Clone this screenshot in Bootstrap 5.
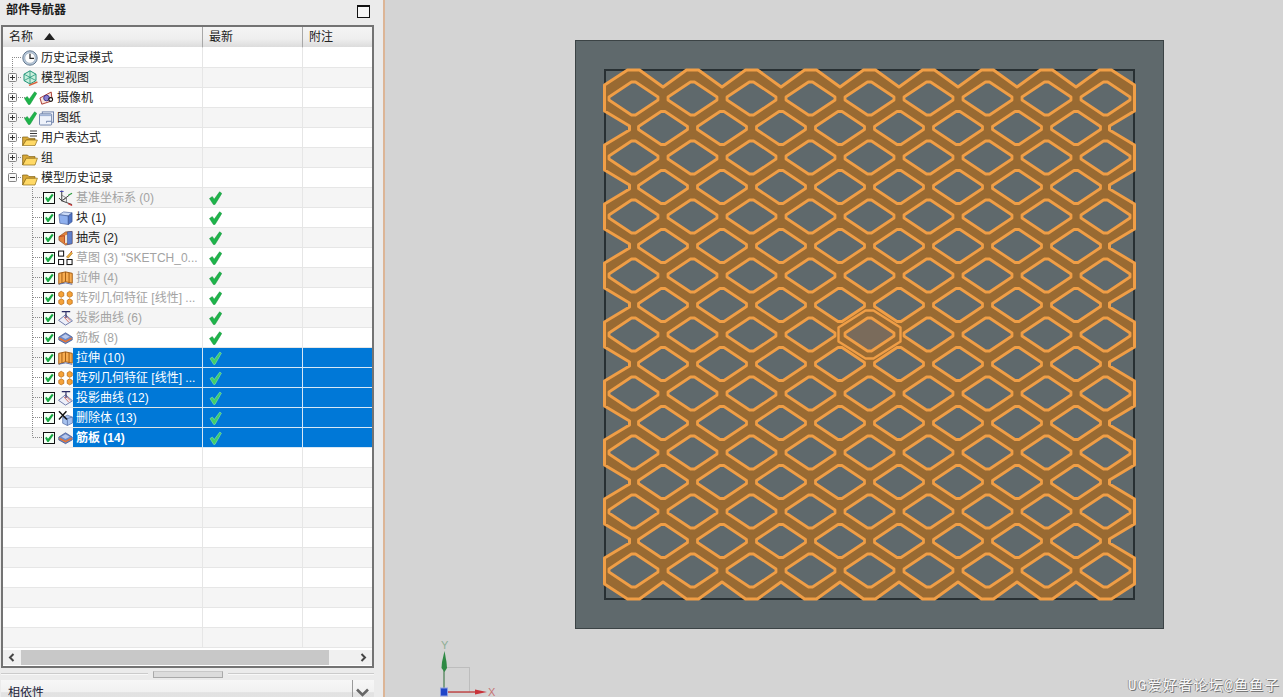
<!DOCTYPE html>
<html lang="zh-CN">
<head>
  <meta charset="UTF-8">
  <title>部件导航器</title>
  <link href="https://cdn.jsdelivr.net/npm/bootstrap@5.3.3/dist/css/bootstrap.min.css" rel="stylesheet">
  <script src="https://cdn.jsdelivr.net/npm/bootstrap@5.3.3/dist/js/bootstrap.bundle.min.js"></script>
  <style>
    html, body { height: 697px; overflow: hidden; }
    body {
      font-family: "Liberation Sans", "Noto Sans CJK SC", sans-serif;
      font-size: 12px;
      line-height: 20px;
      color: #222;
      background: #d4d4d4;
    }
    .side-panel { width: 383px; height: 697px; background: #ebebeb; flex: none; }
    .side-panel > * { flex: none; }
    .side-rule { width: 2px; height: 697px; background: #dcb596; flex: none; }
    .view-area { width: 898px; height: 697px; }
    .view-area svg { display: block; }

    .panel-title { height: 25px; padding: 0 4px 5px 6px; font-weight: 700; line-height: 19px; color: #1c1c1c; }
    .max-box { width: 13px; height: 13px; margin-right: 9px; margin-top: 2px; border: 1px solid #111; border-top-width: 2px; background: #f6f6f6; }

    .tree-frame { width: 373px; height: 643px; margin-left: 1px; border: 2px solid #737373; background: #fff; }
    .tree-table { width: 369px; table-layout: fixed; border-collapse: separate; border-spacing: 0; --bs-table-bg: transparent; }
    .tree-table th, .tree-table td {
      padding: 0; height: 20px; font-weight: 400; color: #222; white-space: nowrap;
      border-bottom: 1px solid #e6e6e6; border-right: 1px solid #e6e6e6;
      box-shadow: none; line-height: 19px;
    }
    .tree-table th:last-child, .tree-table td:last-child { border-right: 0; }
    .tree-table th {
      height: 21px; padding: 1px 0 0 6px; line-height: 19px;
      background: linear-gradient(#f4f4f4, #eeeeee 60%, #dcdcdc);
      border-bottom: 1px solid #fff; border-right: 1px solid #a8a8a8;
    }
    .tree-table tbody tr:nth-child(even) td { background: #f5f5f5; }
    .tree-table tbody tr.picked td { background: #0078d7; border-color: #d8e8f6; }
    .tree-table tbody tr.picked td:first-child { background: transparent; border-bottom-color: #e6e6e6; border-right-color: #d8e8f6; }
    .tree-table tbody tr.picked:nth-child(even) td:first-child { background: #f5f5f5; }
    .sort-mark { margin-left: 11px; vertical-align: 1px; }

    .name-cell { height: 19px; }
    .lv-a { padding-left: 19px; }
    .lv-b { padding-left: 21px; }
    .lv-c { padding-left: 40px; }
    .ico { width: 16px; height: 16px; flex: none; }
    .tick-ico { width: 13px; height: 14px; flex: none; }
    .box-ico { width: 12px; height: 12px; flex: none; margin-right: 3px; }
    .lbl-a { margin-left: 3px; padding-top: 1px; }
    .lbl-c { padding-left: 3px; padding-top: 1px; flex: 1; min-width: 0; overflow: hidden; }
    .lv-b .ico { width: 15px; margin-left: 2px; }
    .lv-c .ico { width: 15px; }
    .dim-text { color: #a3a3a3; }
    .tree-table .picked .lbl-c { background: #0078d7; color: #fff; height: 19px; }
    .tree-table .picked .strong-text { font-weight: 700; }
    .col-tick { display: block; margin: 3px 0 0 6px; }

    .tree-lines { left: 0; top: 0; pointer-events: none; }
    .h-bar { height: 15px; margin-top: 2px; background: #f0f0f0; padding: 0 5px; }
    .h-thumb { position: relative; left: 6px; width: 308px; height: 15px; background: #c8c8c8; }

    .split-row { height: 12px; padding: 0 9px 0 1px; }
    .split-line { height: 2px; background: #cbcbcb; border-bottom: 1px solid #f8f8f8; }
    .split-grip { width: 70px; height: 7px; margin: 0 5px; background: #dcdcdc; border: 1px solid #a9a9a9; border-top-color: #c8c8c8; }
    .dep-bar {
      width: 373px; height: 30px; margin-left: 1px; padding-left: 7px; padding-top: 3px;
      background: linear-gradient(#f7f7f7, #f1f1f1 40%, #e2e2e2 42%, #e4e4e4);
      color: #23233a; font-size: 12px;
    }
    .dep-end { width: 22px; border-left: 1px solid #9a9a9a; height: 30px; margin-top: -3px; padding: 8px 0 0 3px; }

    .stamp {
      right: 3px; bottom: 1px; font-family: "Liberation Mono", "Noto Sans CJK SC", monospace;
      font-size: 14px; letter-spacing: 1.35px; line-height: 20px; color: #f8f8f8;
      text-shadow: 1px 1px 0 #777, -1px 0 0 #999;
    }
    .axis-text { font-family: "Liberation Sans", sans-serif; font-size: 11px; }
  </style>
</head>
<body>
  <!-- shared icons -->
  <svg class="position-absolute" width="0" height="0" aria-hidden="true">
    <symbol id="i-tick" viewBox="0 0 13 14">
      <path d="M0.5 7.5 3.3 5.6 5.2 8.2 10.6 0.8 12.8 2.4 6 13.5H4.4Z" fill="#1eb44a" stroke="#15903a" stroke-width=".5"/>
    </symbol>
    <symbol id="i-tick-sel" viewBox="0 0 13 14">
      <path d="M1 7.5 3.4 6 5.2 8.6 10.8 1 12.4 2.2 6 13.4H4.6Z" fill="#3fce6c" stroke="#9ce8b4" stroke-width=".5"/>
    </symbol>
    <symbol id="i-box" viewBox="0 0 12 12">
      <rect x=".5" y=".5" width="11" height="11" fill="#f4fff6" stroke="#111"/>
      <path d="M2 6 3.6 4.8 5 6.8 9 1.8 10.6 3 5.6 10H4.4Z" fill="#17a943"/>
    </symbol>
    <symbol id="i-clock" viewBox="0 0 16 16">
      <circle cx="8" cy="8" r="7.2" fill="#b7c8da" stroke="#64788e"/>
      <circle cx="8" cy="8" r="5.2" fill="#fdfdfd" stroke="#8fa1b4" stroke-width=".6"/>
      <path d="M8 3.8V8.4H12" fill="none" stroke="#222" stroke-width="1.2"/>
    </symbol>
    <symbol id="i-view" viewBox="0 0 16 16">
      <path d="M8 .8 14 4.2V10.6L8 14 2 10.6V4.2Z" fill="#c8efdc" stroke="#23957a"/>
      <path d="M2 4.2 14 10.6M14 4.2 2 10.6M8 .8V14" fill="none" stroke="#23957a" stroke-width=".8"/>
      <path d="M7 15.4 15.4 12" stroke="#d8623a" stroke-width="1.4"/>
    </symbol>
    <symbol id="i-cam" viewBox="0 0 16 16">
      <path d="M1 8 13 1.6 14 11 3 14.6Z" fill="#f8e4dc" stroke="#a8352c"/>
      <circle cx="8" cy="8" r="3" fill="#8a7fd0" stroke="#3a2f90"/>
      <circle cx="12.5" cy="9.6" r="2" fill="#fff" stroke="#111" stroke-width="1.2"/>
    </symbol>
    <symbol id="i-sheet" viewBox="0 0 16 16">
      <rect x="3.5" y="1.5" width="12" height="11" fill="#f3f5fb" stroke="#6b7fa8"/>
      <rect x=".5" y="3.5" width="13" height="12" rx="1" fill="#eef2fa" stroke="#6b7fa8"/>
      <path d="M1 4h12v2H1Z" fill="#9fb2d4"/>
      <path d="M8 13V11.5H13" fill="none" stroke="#6b7fa8"/>
    </symbol>
    <symbol id="i-folder" viewBox="0 0 16 16">
      <path d="M.6 15V5H5.5L7 6.6H13V8.5H4.5L.6 15Z" fill="#d8a93a" stroke="#7c5c10" stroke-width=".7"/>
      <path d="M.8 15 4.2 8.2H15.4L13 15Z" fill="#ffd966" stroke="#8c6a14" stroke-width=".7"/>
    </symbol>
    <symbol id="i-folder-x" viewBox="0 0 16 16">
      <path d="M.6 15.6V7H5.5L7 8.4H13V10H4.5L.6 15.6Z" fill="#d8a93a" stroke="#7c5c10" stroke-width=".7"/>
      <path d="M.8 15.6 4.2 10H15.4L13 15.6Z" fill="#ffd966" stroke="#8c6a14" stroke-width=".7"/>
      <path d="M8 1H15M8 3.5H15M8 6H15" stroke="#222" stroke-width=".9"/>
    </symbol>
    <symbol id="i-csys" viewBox="0 0 16 16">
      <path d="M4 0V11L1 8M4 11 12 5M4 11 15 15" fill="none" stroke="#333"/>
      <path d="M4 5 9 8 4 11M9 8 9 13" fill="none" stroke="#666" stroke-width=".8"/>
      <path d="M2 1H6" stroke="#3a3ab0"/>
      <path d="M11 14 15 16" stroke="#d03030" stroke-width="1.2"/>
      <path d="M11 5 15 3" stroke="#2a9a3a" stroke-width="1.2"/>
    </symbol>
    <symbol id="i-block" viewBox="0 0 16 16">
      <path d="M1 4.5 6 1.5 15 2.5 11 5.8Z" fill="#cddcf8" stroke="#46609c" stroke-width=".7"/>
      <path d="M1 4.5 11 5.8V15L2 13.6Z" fill="#8fb0ee" stroke="#46609c" stroke-width=".7"/>
      <path d="M11 5.8 15 2.5V12L11 15Z" fill="#4f74c6" stroke="#35508e" stroke-width=".7"/>
    </symbol>
    <symbol id="i-shell" viewBox="0 0 16 16">
      <path d="M1 6.5 8 1.5 15 1V14L8 15.5 1 10.5Z" fill="#e2843c" stroke="#8a4a20" stroke-width=".7"/>
      <path d="M7 5.5 13 3V12.5L7 13.5Z" fill="#f4ecd8"/>
      <path d="M10 1.5 15 1V14L10 15Z" fill="#5f7fcb" stroke="#3a4f8c" stroke-width=".6"/>
      <path d="M1 6.5 7 5.5V13.5" fill="none" stroke="#b8431c"/>
    </symbol>
    <symbol id="i-sketch" viewBox="0 0 16 16">
      <g fill="#fff" stroke="#111" stroke-width="1.1">
        <rect x=".6" y=".6" width="5.4" height="5.4"/>
        <rect x=".6" y="9.6" width="5.4" height="5.4"/>
        <rect x="9.6" y="9.6" width="5.4" height="5.4"/>
      </g>
      <path d="M9 7 14 1.5 15.5 3 11 8Z" fill="#f2b13c" stroke="#9a6514" stroke-width=".6"/>
      <path d="M13.6 1.8 15 .6" stroke="#c03020"/>
    </symbol>
    <symbol id="i-extrude" viewBox="0 0 16 16">
      <path d="M.8 3 8 1.5 15.2 3V13.5L8 12 .8 14.5Z" fill="#f8ac50" stroke="#a05a10"/>
      <path d="M4.2 2.6V13.2M8 1.5V12M11.8 2.6V13" stroke="#a05a10"/>
      <path d="M.8 14.6 8 13.2 15.2 14.8" fill="none" stroke="#5f6fa8"/>
    </symbol>
    <symbol id="i-pattern" viewBox="0 0 16 16">
      <g fill="#f5a238" stroke="#b05f08" stroke-width=".7">
        <path d="M.8 2.5 3.4.8 6.2 2.5V5.8L3.4 7.3.8 5.8Z"/>
        <path d="M9.8 2.5 12.4.8 15.2 2.5V5.8L12.4 7.3 9.8 5.8Z"/>
        <path d="M.8 10.5 3.4 8.8 6.2 10.5V13.8L3.4 15.3.8 13.8Z"/>
        <path d="M9.8 10.5 12.4 8.8 15.2 10.5V13.8L12.4 15.3 9.8 13.8Z"/>
      </g>
    </symbol>
    <symbol id="i-project" viewBox="0 0 16 16">
      <path d="M.6 10.5 8 4.5 15.4 11 8 15.6Z" fill="#eceef8" stroke="#6a76a8"/>
      <path d="M6.5 7 11.5 12.5M8.5 6 13 10.8" stroke="#d86a5a"/>
      <path d="M4 1.2H13M8.5 1.2V8" fill="none" stroke="#2d2d66" stroke-width="1.2"/>
    </symbol>
    <symbol id="i-rib" viewBox="0 0 16 16">
      <path d="M.8 7 8 2.4 15.2 7V10L8 14 .8 10Z" fill="#6f8ac8" stroke="#3d4f86" stroke-width=".7"/>
      <path d="M1.4 7.4 8 11 14.6 7.4V9.2L8 12.8 1.4 9.2Z" fill="#e8722c"/>
      <path d="M3.6 6.6 8 4 12.4 6.6 8 9Z" fill="#b9c8ea"/>
    </symbol>
    <symbol id="i-delete" viewBox="0 0 16 16">
      <path d="M5 7.5 10 5 15.4 7V13.4L10 16 5 13.6Z" fill="#a8c2ee" stroke="#46609c" stroke-width=".7"/>
      <path d="M10 8.6V16M5 7.5 10 8.6 15.4 7" fill="none" stroke="#46609c" stroke-width=".7"/>
      <path d="M1 .8 9.5 9.5M9 .8 1 9.5" stroke="#111" stroke-width="1.5"/>
    </symbol>
  </svg>

  <div class="d-flex">
    <div class="side-panel position-relative d-flex flex-column overflow-hidden">
      <div class="panel-title d-flex justify-content-between align-items-center">
        <span>部件导航器</span>
        <span class="max-box"></span>
      </div>

      <div class="tree-frame">
        <table class="table mb-0 tree-table">
          <colgroup><col style="width:200px"><col style="width:100px"><col style="width:69px"></colgroup>
          <thead>
            <tr>
              <th>名称<svg class="sort-mark" width="11" height="7" viewBox="0 0 11 7"><path d="M5.5 0 11 7H0Z" fill="#222"/></svg></th>
              <th>最新</th>
              <th>附注</th>
            </tr>
          </thead>
          <tbody>
            <tr><td><div class="name-cell d-flex align-items-center lv-a"><svg class="ico"><use href="#i-clock"/></svg><span class="lbl-a">历史记录模式</span></div></td><td></td><td></td></tr>
            <tr><td><div class="name-cell d-flex align-items-center lv-a"><svg class="ico"><use href="#i-view"/></svg><span class="lbl-a">模型视图</span></div></td><td></td><td></td></tr>
            <tr><td><div class="name-cell d-flex align-items-center lv-b"><svg class="tick-ico"><use href="#i-tick"/></svg><svg class="ico"><use href="#i-cam"/></svg><span class="lbl-a">摄像机</span></div></td><td></td><td></td></tr>
            <tr><td><div class="name-cell d-flex align-items-center lv-b"><svg class="tick-ico"><use href="#i-tick"/></svg><svg class="ico"><use href="#i-sheet"/></svg><span class="lbl-a">图纸</span></div></td><td></td><td></td></tr>
            <tr><td><div class="name-cell d-flex align-items-center lv-a"><svg class="ico"><use href="#i-folder-x"/></svg><span class="lbl-a">用户表达式</span></div></td><td></td><td></td></tr>
            <tr><td><div class="name-cell d-flex align-items-center lv-a"><svg class="ico"><use href="#i-folder"/></svg><span class="lbl-a">组</span></div></td><td></td><td></td></tr>
            <tr><td><div class="name-cell d-flex align-items-center lv-a"><svg class="ico"><use href="#i-folder"/></svg><span class="lbl-a">模型历史记录</span></div></td><td></td><td></td></tr>

            <tr><td><div class="name-cell d-flex align-items-center lv-c"><svg class="box-ico"><use href="#i-box"/></svg><svg class="ico"><use href="#i-csys"/></svg><span class="lbl-c dim-text">基准坐标系 (0)</span></div></td><td><svg class="tick-ico col-tick"><use href="#i-tick"/></svg></td><td></td></tr>
            <tr><td><div class="name-cell d-flex align-items-center lv-c"><svg class="box-ico"><use href="#i-box"/></svg><svg class="ico"><use href="#i-block"/></svg><span class="lbl-c">块 (1)</span></div></td><td><svg class="tick-ico col-tick"><use href="#i-tick"/></svg></td><td></td></tr>
            <tr><td><div class="name-cell d-flex align-items-center lv-c"><svg class="box-ico"><use href="#i-box"/></svg><svg class="ico"><use href="#i-shell"/></svg><span class="lbl-c">抽壳 (2)</span></div></td><td><svg class="tick-ico col-tick"><use href="#i-tick"/></svg></td><td></td></tr>
            <tr><td><div class="name-cell d-flex align-items-center lv-c"><svg class="box-ico"><use href="#i-box"/></svg><svg class="ico"><use href="#i-sketch"/></svg><span class="lbl-c dim-text">草图 (3) "SKETCH_0...</span></div></td><td><svg class="tick-ico col-tick"><use href="#i-tick"/></svg></td><td></td></tr>
            <tr><td><div class="name-cell d-flex align-items-center lv-c"><svg class="box-ico"><use href="#i-box"/></svg><svg class="ico"><use href="#i-extrude"/></svg><span class="lbl-c dim-text">拉伸 (4)</span></div></td><td><svg class="tick-ico col-tick"><use href="#i-tick"/></svg></td><td></td></tr>
            <tr><td><div class="name-cell d-flex align-items-center lv-c"><svg class="box-ico"><use href="#i-box"/></svg><svg class="ico"><use href="#i-pattern"/></svg><span class="lbl-c dim-text">阵列几何特征 [线性] ...</span></div></td><td><svg class="tick-ico col-tick"><use href="#i-tick"/></svg></td><td></td></tr>
            <tr><td><div class="name-cell d-flex align-items-center lv-c"><svg class="box-ico"><use href="#i-box"/></svg><svg class="ico"><use href="#i-project"/></svg><span class="lbl-c dim-text">投影曲线 (6)</span></div></td><td><svg class="tick-ico col-tick"><use href="#i-tick"/></svg></td><td></td></tr>
            <tr><td><div class="name-cell d-flex align-items-center lv-c"><svg class="box-ico"><use href="#i-box"/></svg><svg class="ico"><use href="#i-rib"/></svg><span class="lbl-c dim-text">筋板 (8)</span></div></td><td><svg class="tick-ico col-tick"><use href="#i-tick"/></svg></td><td></td></tr>

            <tr class="picked"><td><div class="name-cell d-flex align-items-center lv-c"><svg class="box-ico"><use href="#i-box"/></svg><svg class="ico"><use href="#i-extrude"/></svg><span class="lbl-c">拉伸 (10)</span></div></td><td><svg class="tick-ico col-tick"><use href="#i-tick-sel"/></svg></td><td></td></tr>
            <tr class="picked"><td><div class="name-cell d-flex align-items-center lv-c"><svg class="box-ico"><use href="#i-box"/></svg><svg class="ico"><use href="#i-pattern"/></svg><span class="lbl-c">阵列几何特征 [线性] ...</span></div></td><td><svg class="tick-ico col-tick"><use href="#i-tick-sel"/></svg></td><td></td></tr>
            <tr class="picked"><td><div class="name-cell d-flex align-items-center lv-c"><svg class="box-ico"><use href="#i-box"/></svg><svg class="ico"><use href="#i-project"/></svg><span class="lbl-c">投影曲线 (12)</span></div></td><td><svg class="tick-ico col-tick"><use href="#i-tick-sel"/></svg></td><td></td></tr>
            <tr class="picked"><td><div class="name-cell d-flex align-items-center lv-c"><svg class="box-ico"><use href="#i-box"/></svg><svg class="ico"><use href="#i-delete"/></svg><span class="lbl-c">删除体 (13)</span></div></td><td><svg class="tick-ico col-tick"><use href="#i-tick-sel"/></svg></td><td></td></tr>
            <tr class="picked"><td><div class="name-cell d-flex align-items-center lv-c"><svg class="box-ico"><use href="#i-box"/></svg><svg class="ico"><use href="#i-rib"/></svg><span class="lbl-c strong-text">筋板 (14)</span></div></td><td><svg class="tick-ico col-tick"><use href="#i-tick-sel"/></svg></td><td></td></tr>

            <tr><td></td><td></td><td></td></tr>
            <tr><td></td><td></td><td></td></tr>
            <tr><td></td><td></td><td></td></tr>
            <tr><td></td><td></td><td></td></tr>
            <tr><td></td><td></td><td></td></tr>
            <tr><td></td><td></td><td></td></tr>
            <tr><td></td><td></td><td></td></tr>
            <tr><td></td><td></td><td></td></tr>
            <tr><td></td><td></td><td></td></tr>
            <tr><td></td><td></td><td></td></tr>
          </tbody>
        </table>
        <div class="h-bar d-flex align-items-center justify-content-between">
          <svg width="7" height="9" viewBox="0 0 7 9"><path d="M5.5 1 2 4.5 5.5 8" fill="none" stroke="#444" stroke-width="2"/></svg>
          <div class="h-thumb me-auto"></div>
          <svg width="7" height="9" viewBox="0 0 7 9"><path d="M1.5 1 5 4.5 1.5 8" fill="none" stroke="#444" stroke-width="2"/></svg>
        </div>
      </div>

      <div class="split-row d-flex align-items-center">
        <div class="split-line flex-grow-1"></div>
        <div class="split-grip"></div>
        <div class="split-line flex-grow-1"></div>
      </div>

      <div class="dep-bar d-flex justify-content-between">
        <span>相依性</span>
        <div class="dep-end">
          <svg class="d-block" width="13" height="9" viewBox="0 0 13 9"><path d="M1 1.5 6.5 7 12 1.5" fill="none" stroke="#666" stroke-width="2.6"/></svg>
        </div>
      </div>

      <!-- tree connectors and expanders -->
      <svg class="tree-lines position-absolute" width="373" height="450" viewBox="0 0 373 450" id="treeLines"></svg>
    </div>

    <div class="side-rule"></div>

    <div class="view-area position-relative">
      <svg id="model" width="898" height="697" viewBox="385 0 898 697">
        <rect x="575.5" y="40.5" width="588" height="588" fill="#5f696c" stroke="#3b4345"/>
        <rect x="605" y="70" width="529" height="529" fill="#5f696c" stroke="#283033" stroke-width="2"/>
        <g id="mesh"></g>

        <!-- triad -->
        <rect x="444.5" y="667.5" width="25" height="25" fill="none" stroke="#bdbdbd"/>
        <path d="M444 692V662" stroke="#7f9f84" stroke-width="2"/>
        <path d="M444.5 651 442 662 441.5 668 444.5 672 447 668 446.5 662Z" fill="#2f8a45"/>
        <path d="M444 692H478" stroke="#c24a4a" stroke-width="1.5"/>
        <path d="M475 689.5 487 692 475 694.5Z" fill="#c8333a"/>
        <rect x="440.5" y="688" width="7" height="8" fill="#1f45c8" stroke="#8fa0e0"/>
        <text class="axis-text" x="441" y="649" fill="#8fae95">Y</text>
        <text class="axis-text" x="488" y="696" fill="#c67474">X</text>
      </svg>
      <div class="stamp position-absolute">UG爱好者论坛@鱼鱼子</div>
    </div>
  </div>

  <script>
    const NS = "http://www.w3.org/2000/svg";
    const mesh = document.getElementById("mesh");
    const ORANGE = "#f09e46", BROWN = "#996a32", PLATE = "#5f696c";

    function poly(parent, pts, fill, stroke, width) {
      const el = document.createElementNS(NS, "polygon");
      el.setAttribute("points", pts.map(p => p.join(",")).join(" "));
      el.setAttribute("fill", fill);
      el.setAttribute("stroke", stroke);
      el.setAttribute("stroke-width", width);
      el.setAttribute("stroke-linejoin", "round");
      parent.appendChild(el);
    }

    // mesh outline, clockwise from the top left corner
    const midX = 869.5, midY = 334.5, stepX = 59, stepY = 29.5;
    const meshL = 604.5, meshR = 1134.5, meshT = 70, meshB = 599;
    const outline = [[meshL, 85]];
    for (let i = -4; i <= 4; i++) {
      const cx = midX + i * stepX;
      outline.push([cx - 6, meshT], [cx + 6, meshT]);
      if (i < 4) outline.push([cx + stepX / 2, 87]);
    }
    outline.push([meshR, 85]);
    for (let r = -7; r <= 7; r += 2) {
      const cy = midY + r * stepY;
      outline.push([meshR, cy - 17], [meshR - 25, cy - 2], [meshR - 25, cy + 2], [meshR, cy + 17]);
    }
    outline.push([meshR, 584]);
    for (let i = 4; i >= -4; i--) {
      const cx = midX + i * stepX;
      outline.push([cx + 6, meshB], [cx - 6, meshB]);
      if (i > -4) outline.push([cx - stepX / 2, 582]);
    }
    outline.push([meshL, 584]);
    for (let r = 7; r >= -7; r -= 2) {
      const cy = midY + r * stepY;
      outline.push([meshL, cy + 17], [meshL + 25, cy + 2], [meshL + 25, cy - 2], [meshL, cy - 17]);
    }
    poly(mesh, outline, BROWN, ORANGE, 3);

    function hole(cx, cy, fill) {
      poly(mesh, [[cx - 2, cy - 16.5], [cx + 2, cy - 16.5], [cx + 24.5, cy - 1.5], [cx + 24.5, cy + 1.5],
        [cx + 2, cy + 16.5], [cx - 2, cy + 16.5], [cx - 24.5, cy + 1.5], [cx - 24.5, cy - 1.5]], fill, ORANGE, 2.8);
    }

    // full holes only, the half ones at the sides are notches in the outline
    for (let r = -8; r <= 8; r++) {
      const odd = Math.abs(r) % 2 === 1;
      const from = odd ? -3.5 : -4, to = odd ? 3.5 : 4;
      for (let c = from; c <= to; c++) {
        if (r === 0 && c === 0) continue;
        hole(midX + c * stepX, midY + r * stepY, PLATE);
      }
    }

    // selected centre cell
    poly(mesh, [[midX - 4, midY - 24], [midX + 4, midY - 24], [midX + 31, midY - 7], [midX + 31, midY + 7],
      [midX + 4, midY + 24], [midX - 4, midY + 24], [midX - 31, midY + 7], [midX - 31, midY - 7]], BROWN, ORANGE, 2.4);
    hole(midX, midY, "#7a6b5b");

    // tree connectors
    const lines = document.getElementById("treeLines");
    let svg = "";
    const dot = 'stroke="#8a8a8a" stroke-dasharray="1 1" fill="none"';
    svg += `<path d="M12.5 57V177" ${dot}/>`;
    svg += `<path d="M12 57.5H22" ${dot}/>`;
    [[77, 22], [97, 25], [117, 25], [137, 22], [157, 22], [177, 22]].forEach(([y, end]) => {
      svg += `<path d="M16 ${y + 0.5}H${end}" ${dot}/>`;
    });
    svg += `<path d="M32.5 187V437.5" ${dot}/>`;
    for (let y = 197; y <= 437; y += 20) svg += `<path d="M33 ${y + 0.5}H43" ${dot}/>`;
    [77, 97, 117, 137, 157, 177].forEach(y => {
      const plus = y < 177 ? `<path d="M12.5 ${y - 2}V${y + 3}" stroke="#333"/>` : "";
      svg += `<rect x="8.5" y="${y - 3.5}" width="8" height="8" rx="1" fill="#f8f8f8" stroke="#858585"/>`;
      svg += `<path d="M10 ${y + 0.5}H15" stroke="#333"/>${plus}`;
    });
    lines.innerHTML = svg;
  </script>
</body>
</html>
